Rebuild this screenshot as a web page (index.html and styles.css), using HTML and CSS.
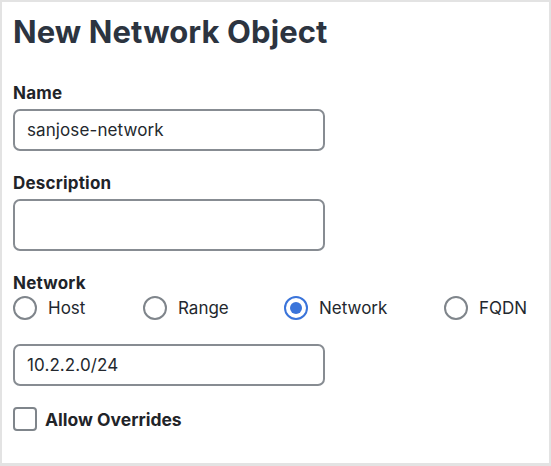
FILE: index.html
```html
<!DOCTYPE html>
<html>
<head>
<meta charset="utf-8">
<link rel="stylesheet" href="styles.css">
</head>
<body>
<div class="frame">
  <h1 class="title">New Network Object</h1>
  <div class="field field-name">
    <div class="label">Name</div>
    <div class="input">sanjose-network</div>
  </div>
  <div class="field">
    <div class="label">Description</div>
    <div class="input input-tall"></div>
  </div>
  <div class="field">
    <div class="label">Network</div>
    <div class="radios">
      <div class="radio"><span class="circle"></span><span class="rlabel">Host</span></div>
      <div class="radio"><span class="circle"></span><span class="rlabel">Range</span></div>
      <div class="radio"><span class="circle checked"></span><span class="rlabel">Network</span></div>
      <div class="radio"><span class="circle"></span><span class="rlabel">FQDN</span></div>
    </div>
    <div class="input input-net">10.2.2.0/24</div>
  </div>
  <div class="check">
    <span class="box"></span><span class="clabel">Allow Overrides</span>
  </div>
</div>
</body>
</html>
```
FILE: styles.css
```css
html, body {
  margin: 0;
  padding: 0;
  background: #ffffff;
}
.frame {
  box-sizing: border-box;
  width: 551px;
  height: 466px;
  border: 2px solid #e3e3e3;
  border-bottom-width: 3px;
  padding: 12px 11px;
  font-family: Inter, "Noto Sans", sans-serif;
  color: #23282e;
}
.title {
  margin: 0;
  font-size: 31px;
  line-height: 36px;
  font-weight: 700;
  color: #2c3440;
  letter-spacing: 0.1px;
}
.field {
  margin-top: 22px;
}
.field-name {
  margin-top: 33px;
}
.label {
  font-size: 17px;
  line-height: 20px;
  font-weight: 700;
  color: #1f2429;
  letter-spacing: 0.2px;
}
.input {
  box-sizing: border-box;
  margin-top: 6px;
  width: 312px;
  height: 42px;
  border: 2px solid #878c92;
  border-radius: 7px;
  padding: 0 12px;
  font-size: 17px;
  line-height: 38px;
  color: #23282e;
  letter-spacing: 0.1px;
}
.input-tall {
  height: 52px;
}
.radios {
  display: grid;
  grid-template-columns: 130px 141px 160px auto;
  margin-top: 3px;
  height: 24px;
}
.radio {
  display: flex;
  align-items: center;
}
.circle {
  box-sizing: border-box;
  width: 24px;
  height: 24px;
  border: 2px solid #7f858b;
  border-radius: 50%;
  display: flex;
  align-items: center;
  justify-content: center;
}
.circle.checked {
  border: 2.5px solid #3a74da;
}
.circle.checked::after {
  content: "";
  width: 12px;
  height: 12px;
  border-radius: 50%;
  background: #3a74da;
}
.rlabel {
  margin-left: 11px;
  font-size: 17px;
  color: #23282e;
}
.input-net {
  margin-top: 24px;
}
.check {
  display: flex;
  align-items: center;
  margin-top: 21px;
}
.box {
  box-sizing: border-box;
  width: 24px;
  height: 24px;
  border: 2px solid #7f858b;
  border-radius: 4px;
}
.clabel {
  margin-left: 8px;
  font-size: 17.5px;
  font-weight: 700;
  color: #1f2429;
}
```
